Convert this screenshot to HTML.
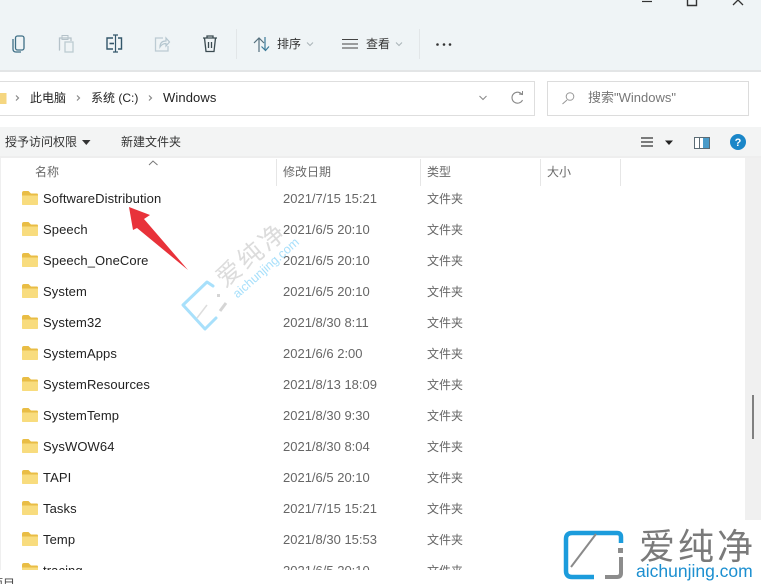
<!DOCTYPE html>
<html><head><meta charset="utf-8"><style>
html,body{margin:0;padding:0;background:#fff}
#p{position:relative;width:761px;height:584px;overflow:hidden;background:#fff;font-family:"Liberation Sans","Noto Sans CJK SC",sans-serif;font-size:12px;color:#222}
#p div{position:absolute;white-space:nowrap}
.n{left:43px;font-size:13px;letter-spacing:.1px;color:#222;line-height:16px;margin-top:1px}
.d{left:283px;font-size:13px;color:#666;line-height:16px;margin-top:1px}
.t{left:427px;font-size:12px;color:#666;line-height:16px;margin-top:1px}
.h{top:164px;font-size:12px;color:#6a6a6a;line-height:16px}
.s{top:159px;width:1px;height:27px;background:#e6e6e6}
svg{position:absolute;left:0;top:0}
</style></head><body><div id="p">
<div style="left:0;top:0;width:761px;height:70px;background:#eff4f6"></div>
<div style="left:0;top:70px;width:761px;height:2px;background:#e3e5e6"></div>
<div style="left:0;top:81px;width:534px;height:33px;border:1px solid #dedede;border-left:0"></div>
<div style="left:547px;top:81px;width:200px;height:33px;border:1px solid #dcdcdc"></div>
<div style="left:0;top:127px;width:761px;height:29px;background:#f3f4f4"></div>
<div style="left:0;top:156px;width:761px;height:2px;background:#eeeeee"></div>
<div style="left:745px;top:158px;width:16px;height:362px;background:#f0f0f0"></div>
<div style="left:0;top:158px;width:1px;height:412px;background:#efefef"></div>
<div style="left:752px;top:395px;width:2px;height:44px;background:#808080"></div>

<svg width="761" height="584" viewBox="0 0 761 584" fill="none">
<!-- window controls -->
<path d="M642 1.500H652" stroke="#333" stroke-width="1.200"/>
<path d="M687.500 0V5.500H696.500V0" stroke="#333" stroke-width="1.400"/>
<path d="M738 0L733 5M738 0L743 5" stroke="#333" stroke-width="1.300"/>
<!-- copy -->
<rect x="15.500" y="36" width="8.500" height="14" rx="2" stroke="#3f6f86" stroke-width="1.300"/>
<path d="M13 39V49Q13 52 16 52H21" stroke="#3f6f86" stroke-width="1.300"/>
<!-- paste -->
<path d="M60 50H59.500V38H71V41" stroke="#b5c2c9" stroke-width="1.300"/>
<rect x="62" y="35.500" width="6" height="4" stroke="#b5c2c9"/>
<rect x="65" y="42" width="8" height="10" stroke="#bccbd1" stroke-width="1.300"/>
<!-- rename -->
<path d="M113 38H107V49H113M118 38H121.500V49H118" stroke="#33566a" stroke-width="1.400"/>
<path d="M115.500 35V52M113 35H118M113 52H118" stroke="#33566a" stroke-width="1.200"/>
<path d="M109.500 43.500H114" stroke="#33566a" stroke-width="1.600"/>
<!-- share -->
<path d="M163 38H155.500V51H168V46" stroke="#bccbd3" stroke-width="1.300"/>
<path d="M160 47C160 42 163 41 166 41V38L169.500 42L166 46V43.500C163.500 43.500 161.500 44.500 160 47Z" stroke="#b5c6cf" stroke-width="1.200"/>
<!-- delete -->
<path d="M203 38H217M207 38V36H213V38M204.500 38L206 51.500H214L215.500 38M208.500 42V48M211.500 42V48" stroke="#3a4a50" stroke-width="1.300"/>
<!-- separators -->
<rect x="236" y="29" width="1" height="30" fill="#e2e6e8"/>
<rect x="419" y="29" width="1" height="30" fill="#e2e6e8"/>
<!-- sort -->
<path d="M259 52V38M254 43L259 38L264 43" stroke="#55707e" stroke-width="1.200"/>
<path d="M265 37V50M261.500 46.500L265.500 50.500L269 46.500" stroke="#3b7a98" stroke-width="1.200"/>
<path d="M307 42.500L310 45.500L313 42.500" stroke="#aab4b8" stroke-width="1"/>
<!-- view -->
<path d="M342 39.500H358M342 44H358M342 48H358" stroke="#444" stroke-width="1.100"/>
<path d="M396 42.500L399 45.500L402 42.500" stroke="#aab4b8" stroke-width="1"/>
<!-- more -->
<circle cx="437.500" cy="44.500" r="1.300" fill="#333"/><circle cx="444" cy="44.500" r="1.300" fill="#333"/><circle cx="450" cy="44.500" r="1.300" fill="#333"/>
<!-- address -->
<path d="M0 93H6.500V104H0Z" fill="#f5d680"/>
<path d="M16 95.500L18.500 98L16 100.500M77 95.500L79.500 98L77 100.500M149 95.500L151.500 98L149 100.500" stroke="#888" stroke-width="1.200"/>
<path d="M479.500 96L483 99.500L486.500 96" stroke="#888" stroke-width="1"/>
<path d="M522 94.500A5.500 5.500 0 1 0 522.500 100" stroke="#888" stroke-width="1.100"/>
<path d="M519 94L522.500 94.500L522.500 91" stroke="#888" stroke-width="1"/>
<!-- search -->
<circle cx="570" cy="96.500" r="3.800" stroke="#999" stroke-width="1"/><path d="M567 100L562.500 104" stroke="#999" stroke-width="1.100"/>
<!-- cmd -->
<path d="M82 140L90.500 140L86.300 145Z" fill="#333"/>
<path d="M641 138H653M641 142H653M641 146H653" stroke="#333" stroke-width="1.200"/>
<path d="M665 140.500H673L669 145Z" fill="#222"/>
<rect x="694.500" y="137.500" width="15" height="11" stroke="#5b6b74" fill="#fff"/>
<rect x="703" y="138" width="6" height="10" fill="#4a9bc9"/><rect x="699" y="137.500" width="1" height="11" fill="#5b6b74"/>
<circle cx="738" cy="142" r="8" fill="#1a86c8"/>
<text x="738" y="146" font-family="Liberation Sans" font-size="11" font-weight="bold" fill="#fff" text-anchor="middle">?</text>
<!-- sort caret -->
<path d="M149 165L153 161L157.500 165" stroke="#777" stroke-width="1"/>
<!-- folders -->
<defs><g id="f"><path d="M0 2Q0 0 2 0H6.500L9 2.500H15Q16 2.500 16 4V13.500H0Z" fill="#e9bd45"/><path d="M0 4.500H16V13.500Q16 14 15 14H1Q0 14 0 13.500Z" fill="#f8dc7e"/></g></defs>
<use href="#f" x="22" y="191"/><use href="#f" x="22" y="222"/><use href="#f" x="22" y="253"/><use href="#f" x="22" y="284"/><use href="#f" x="22" y="315"/><use href="#f" x="22" y="346"/><use href="#f" x="22" y="377"/><use href="#f" x="22" y="408"/><use href="#f" x="22" y="439"/><use href="#f" x="22" y="470"/><use href="#f" x="22" y="501"/><use href="#f" x="22" y="532"/><use href="#f" x="22" y="563"/>
</svg>

<div style="left:276px" class="s"></div><div style="left:420px" class="s"></div><div style="left:540px" class="s"></div><div style="left:620px" class="s"></div>

<div style="left:277px;top:36px;font-size:12px;line-height:16px;color:#333">排序</div>
<div style="left:366px;top:36px;font-size:12px;line-height:16px;color:#333">查看</div>
<div style="left:30px;top:90px;font-size:12px;line-height:16px">此电脑</div>
<div style="left:91px;top:90px;font-size:12px;line-height:16px">系统 (C:)</div>
<div style="left:163px;top:90px;font-size:13px;line-height:16px;letter-spacing:.1px">Windows</div>
<div style="left:588px;top:90px;font-size:13px;line-height:16px;color:#777">搜索"Windows"</div>
<div style="left:5px;top:134px;font-size:12px;line-height:16px;color:#333">授予访问权限</div>
<div style="left:121px;top:134px;font-size:12px;line-height:16px;color:#333">新建文件夹</div>
<div class="h" style="left:35px">名称</div><div class="h" style="left:283px">修改日期</div><div class="h" style="left:427px">类型</div><div class="h" style="left:547px">大小</div>

<div class="n" style="top:190px">SoftwareDistribution</div><div class="d" style="top:190px">2021/7/15 15:21</div><div class="t" style="top:190px">文件夹</div>
<div class="n" style="top:221px">Speech</div><div class="d" style="top:221px">2021/6/5 20:10</div><div class="t" style="top:221px">文件夹</div>
<div class="n" style="top:252px">Speech_OneCore</div><div class="d" style="top:252px">2021/6/5 20:10</div><div class="t" style="top:252px">文件夹</div>
<div class="n" style="top:283px">System</div><div class="d" style="top:283px">2021/6/5 20:10</div><div class="t" style="top:283px">文件夹</div>
<div class="n" style="top:314px">System32</div><div class="d" style="top:314px">2021/8/30 8:11</div><div class="t" style="top:314px">文件夹</div>
<div class="n" style="top:345px">SystemApps</div><div class="d" style="top:345px">2021/6/6 2:00</div><div class="t" style="top:345px">文件夹</div>
<div class="n" style="top:376px">SystemResources</div><div class="d" style="top:376px">2021/8/13 18:09</div><div class="t" style="top:376px">文件夹</div>
<div class="n" style="top:407px">SystemTemp</div><div class="d" style="top:407px">2021/8/30 9:30</div><div class="t" style="top:407px">文件夹</div>
<div class="n" style="top:438px">SysWOW64</div><div class="d" style="top:438px">2021/8/30 8:04</div><div class="t" style="top:438px">文件夹</div>
<div class="n" style="top:469px">TAPI</div><div class="d" style="top:469px">2021/6/5 20:10</div><div class="t" style="top:469px">文件夹</div>
<div class="n" style="top:500px">Tasks</div><div class="d" style="top:500px">2021/7/15 15:21</div><div class="t" style="top:500px">文件夹</div>
<div class="n" style="top:531px">Temp</div><div class="d" style="top:531px">2021/8/30 15:53</div><div class="t" style="top:531px">文件夹</div>
<div class="n" style="top:562px">tracing</div><div class="d" style="top:562px">2021/6/5 20:10</div><div class="t" style="top:562px">文件夹</div>
<div style="left:0;top:570px;width:761px;height:14px;background:#fff"></div>
<div style="left:-9px;top:576px;font-size:12px;line-height:16px;color:#444">项目</div>

<svg width="761" height="584" viewBox="0 0 761 584" fill="none">
<!-- red arrow -->
<path d="M129 207L150 215L144 219L188 270L137 228L133 230Z" fill="#e8323a"/>
<!-- watermark mid -->
<path d="M213 286L207 282L183 305L205 329L216 318" stroke="#a8e0fb" stroke-width="3" stroke-linecap="round" stroke-linejoin="round"/>
<path d="M207 305L197 318" stroke="#ddd" stroke-width="1.500"/>
<path d="M226 303L220 311" stroke="#d5d5d5" stroke-width="3"/>
<rect x="217" y="294" width="3" height="3" fill="#d5d5d5"/>
<!-- bottom logo -->
<path d="M594 533H572Q566 533 566 539V571Q566 577 572 577H594" stroke="#1c9cdc" stroke-width="4.500"/>
<path d="M594 533H617Q621 533 621 537V543" stroke="#1c9cdc" stroke-width="4.500"/>
<path d="M571 567L596 534" stroke="#8a8a8a" stroke-width="2"/>
<path d="M621 557V573Q621 577 617 577H605" stroke="#8c8c8c" stroke-width="4"/>
<rect x="618" y="548" width="5" height="5" fill="#8c8c8c"/>
</svg>
<div style="left:252px;top:255px;font-size:25px;line-height:30px;color:#dcdcdc;transform:translate(-50%,-50%) rotate(-40deg);letter-spacing:3px">爱纯净</div>
<div style="left:266px;top:268px;font-size:12.500px;line-height:14px;color:#a8e0fb;transform:translate(-50%,-50%) rotate(-41.500deg)">aichunjing.com</div>
<div style="left:639px;top:527px;font-size:36px;line-height:40px;color:#7a7a7a;letter-spacing:3px">爱纯净</div>
<div style="left:636px;top:562px;font-size:17.500px;line-height:18px;color:#1c8fd0">aichunjing.com</div>
</div></body></html>
